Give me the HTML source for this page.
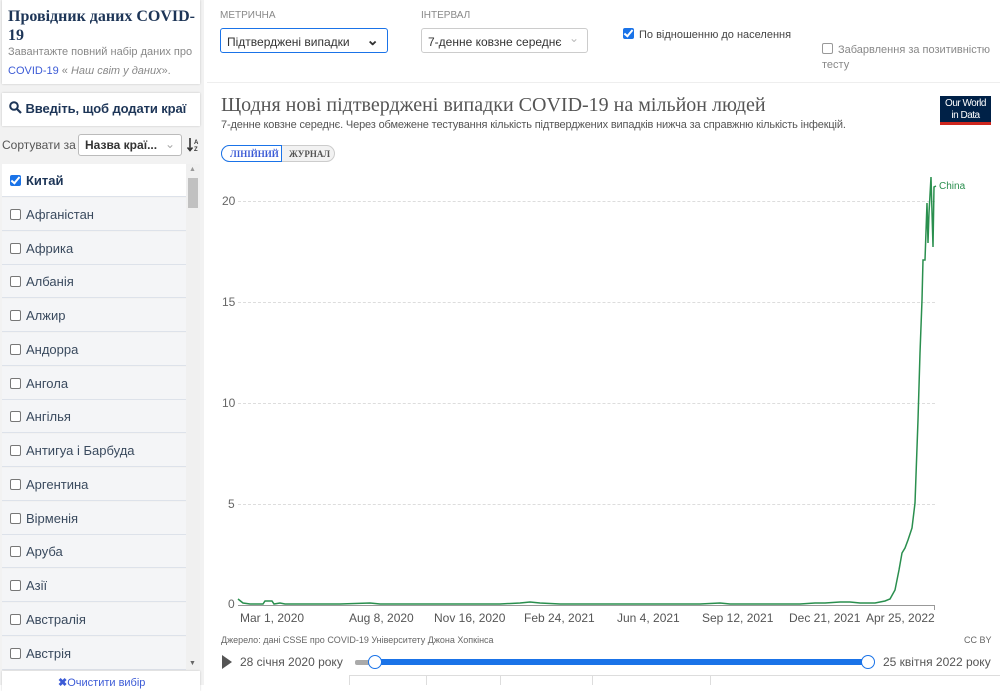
<!DOCTYPE html>
<html><head><meta charset="utf-8"><style>
*{box-sizing:border-box;margin:0;padding:0}
body{width:1000px;height:685px;overflow:hidden;background:#fff;font-family:"Liberation Sans",sans-serif;position:relative;color:#333}
.side{position:absolute;left:0;top:0;width:204px;height:685px;background:#f2f2f2}
.card{position:absolute;background:#fff;box-shadow:0 0 2px rgba(0,0,0,.2)}
.abs{position:absolute;white-space:nowrap}
.row{position:absolute;left:2px;width:184px;height:33px;background:#f4f5f7;border-bottom:1px solid #dde2ea;font-size:13px;color:#3a4a5e;padding:9px 0 0 8px}
.cb{display:inline-block;width:11px;height:11px;border:1px solid #777;border-radius:2px;background:#fff;vertical-align:-1px;margin-right:5px}
.cbk{display:inline-block;width:11px;height:11px;border-radius:2px;background:#1a73e8;vertical-align:-1px;margin-right:5px;position:relative}
.cbk:after{content:"";position:absolute;left:3px;top:0px;width:3px;height:7px;border:solid #fff;border-width:0 2px 2px 0;transform:rotate(40deg)}
.grid{position:absolute;left:238px;width:697px;border-top:1px dashed #ddd}
.yl{position:absolute;font-size:12px;color:#666;left:222px}
.xl{position:absolute;top:611px;font-size:12px;color:#555}
</style></head><body>
<div class="side">
 <div class="card" style="left:2px;top:0;width:198px;height:84px"></div>
 <div class="abs" style="left:8px;top:7px;font-family:'Liberation Serif',serif;font-weight:bold;font-size:16px;color:#1d3557;line-height:19px">Провідник даних COVID-<br>19</div>
 <div class="abs" style="left:8px;top:43px;font-size:11px;color:#888;line-height:19px">Завантажте повний набір даних про<br><span style="color:#3c5bd6">COVID-19</span> « <i>Наш світ у даних</i>».</div>
 <div class="card" style="left:2px;top:93px;width:198px;height:33px"></div>
 <div class="abs" style="left:9px;top:101px;font-size:13px;font-weight:bold;color:#1d3557;letter-spacing:-.1px"><svg width="13" height="13" viewBox="0 0 13 13" style="vertical-align:-1px"><circle cx="5" cy="5" r="3.8" fill="none" stroke="#1d3557" stroke-width="2"/><path d="M8 8L12 12" stroke="#1d3557" stroke-width="2.2"/></svg> Введіть, щоб додати краї</div>
 <div class="abs" style="left:2px;top:138px;font-size:12px;color:#555">Сортувати за</div>
 <div class="abs" style="left:78px;top:134px;width:104px;height:22px;background:#fff;border:1px solid #bbb;border-radius:3px;font-size:12px;font-weight:bold;color:#333;padding:3px 0 0 6px">Назва краї...<span style="position:absolute;right:6px;top:2px;color:#aaa;font-weight:normal">⌄</span></div>
 <svg class="abs" style="left:187px;top:137px" width="14" height="16" viewBox="0 0 14 16"><path d="M3 1V13M0.5 10.5L3 13.5L5.5 10.5" fill="none" stroke="#333" stroke-width="1.6"/><text x="7" y="7" font-size="6" font-weight="bold" fill="#333" font-family="Liberation Sans">A</text><text x="7" y="14" font-size="6" font-weight="bold" fill="#333" font-family="Liberation Sans">Z</text></svg>
 <div style="position:absolute;left:186px;top:164px;width:14px;height:506px;background:#f0f0f0"></div>
 <div style="position:absolute;left:188px;top:178px;width:10px;height:30px;background:#c1c1c1"></div>
 <div class="abs" style="left:189px;top:166px;font-size:7px;color:#999">▲</div>
 <div class="abs" style="left:189px;top:660px;font-size:7px;color:#666">▼</div>
 <div class="row" style="top:164px;background:#fff;font-weight:bold;color:#1d3557"><span class="cbk"></span>Китай</div>
 <div class="row" style="top:198px"><span class="cb"></span>Афганістан</div>
 <div class="row" style="top:231.5px"><span class="cb"></span>Африка</div>
 <div class="row" style="top:265px"><span class="cb"></span>Албанія</div>
 <div class="row" style="top:299px"><span class="cb"></span>Алжир</div>
 <div class="row" style="top:333px"><span class="cb"></span>Андорра</div>
 <div class="row" style="top:366.5px"><span class="cb"></span>Ангола</div>
 <div class="row" style="top:400px"><span class="cb"></span>Ангілья</div>
 <div class="row" style="top:434px"><span class="cb"></span>Антигуа і Барбуда</div>
 <div class="row" style="top:468px"><span class="cb"></span>Аргентина</div>
 <div class="row" style="top:501.5px"><span class="cb"></span>Вірменія</div>
 <div class="row" style="top:535px"><span class="cb"></span>Аруба</div>
 <div class="row" style="top:569px"><span class="cb"></span>Азії</div>
 <div class="row" style="top:603px"><span class="cb"></span>Австралія</div>
 <div class="row" style="top:636.5px;height:33px"><span class="cb"></span>Австрія</div>
 <div class="card" style="left:2px;top:671px;width:198px;height:20px"></div>
 <div class="abs" style="left:58px;top:676px;font-size:11px;color:#3c5bd6"><b>✖</b>Очистити вибір</div>
</div>
<div style="position:absolute;left:207px;top:82px;width:793px;height:1px;background:#eee"></div>
<div class="abs" style="left:220px;top:10px;font-size:10px;color:#888">МЕТРИЧНА</div>
<div class="abs" style="left:220px;top:28px;width:168px;height:25px;border:1px solid #1a73e8;border-radius:3px;font-size:12px;color:#333;padding:6px 0 0 6px">Підтверджені випадки<span style="position:absolute;right:8px;top:2px;font-size:15px;font-weight:bold">⌄</span></div>
<div class="abs" style="left:421px;top:10px;font-size:10px;color:#888">ІНТЕРВАЛ</div>
<div class="abs" style="left:421px;top:28px;width:167px;height:25px;border:1px solid #ccc;border-radius:3px;font-size:12px;color:#333;padding:6px 0 0 6px">7-денне ковзне середнє<span style="position:absolute;right:8px;top:2px;color:#bbb">⌄</span></div>
<div class="abs" style="left:623px;top:28px;font-size:11px;color:#444"><span class="cbk"></span>По відношенню до населення</div>
<div class="abs" style="left:822px;top:43px;font-size:11px;color:#888;line-height:15px"><span class="cb" style="border-color:#999"></span>Забарвлення за позитивністю<br>тесту</div>
<div class="abs" style="left:221px;top:94px;font-family:'Liberation Serif',serif;font-size:20px;color:#555">Щодня нові підтверджені випадки COVID-19 на мільйон людей</div>
<div class="abs" style="left:221px;top:119px;font-size:11px;color:#555;letter-spacing:-.15px">7-денне ковзне середнє. Через обмежене тестування кількість підтверджених випадків нижча за справжню кількість інфекцій.</div>
<div class="abs" style="left:940px;top:96px;width:51px;height:29px;background:#002147;color:#fff;font-size:10px;text-align:center;line-height:12px;padding-top:2px;border-bottom:3px solid #ce261e;letter-spacing:-.5px">Our World<br>in Data</div>
<div class="abs" style="left:221px;top:145px;width:114px;height:17px;border:1px solid #ccc;border-radius:9px;background:#f2f2f2;font-family:'Liberation Serif',serif;font-size:9px;font-weight:bold"><span style="position:absolute;left:-1px;top:-1px;width:61px;height:17px;border:1px solid #1a73e8;border-radius:9px 0 0 9px;background:#fff;color:#3c5bd6;padding:3px 0 0 8px">ЛІНІЙНИЙ</span><span style="position:absolute;left:67px;top:3px;color:#555">ЖУРНАЛ</span></div>
<div class="grid" style="top:201px"></div><div class="grid" style="top:302px"></div><div class="grid" style="top:403px"></div><div class="grid" style="top:504px"></div>
<div class="yl" style="top:194px">20</div><div class="yl" style="top:295px">15</div><div class="yl" style="top:396px">10</div><div class="yl" style="top:497px;left:228px">5</div><div class="yl" style="top:597px;left:228px">0</div>
<div style="position:absolute;left:238px;top:605px;width:697px;height:1px;background:#999"></div>
<div style="position:absolute;left:934px;top:605px;width:1px;height:5px;background:#999"></div>
<svg class="abs" style="left:0;top:0" width="1000" height="685"><polyline fill="none" stroke="#2a8f4e" stroke-width="1.5" points="238,599 243,603 250,604 263,604 265,601 272,601 274,604 280,603 285,604 340,604 370,603 380,604 500,604 520,603 530,602 540,603 560,604 700,604 720,603 730,604 800,604 815,603 825,603 840,602 850,602 860,603 875,603 885,601 890,599 895,590 899,570 902,553 905,548 908,540 912,528 915,503 918,420 920,353 922,300 923,260 925,260 927,203 928,243 929,213 931,177 933,247 934,187 936,186"/></svg>
<div class="abs" style="left:939px;top:181px;font-size:10px;color:#2a8f4e">China</div>
<div class="xl" style="left:240px">Mar 1, 2020</div><div class="xl" style="left:349px">Aug 8, 2020</div><div class="xl" style="left:434px">Nov 16, 2020</div><div class="xl" style="left:524px">Feb 24, 2021</div><div class="xl" style="left:617px">Jun 4, 2021</div><div class="xl" style="left:702px">Sep 12, 2021</div><div class="xl" style="left:789px">Dec 21, 2021</div><div class="xl" style="left:866px">Apr 25, 2022</div>
<div class="abs" style="left:221px;top:635px;font-size:9px;color:#666">Джерело: дані CSSE про COVID-19 Університету Джона Хопкінса</div>
<div class="abs" style="left:964px;top:635px;font-size:9px;color:#666">CC BY</div>
<div class="abs" style="left:222px;top:655px;width:0;height:0;border-left:10px solid #555;border-top:7px solid transparent;border-bottom:7px solid transparent"></div>
<div class="abs" style="left:240px;top:655px;font-size:12px;color:#555">28 січня 2020 року</div>
<div class="abs" style="left:355px;top:660px;width:20px;height:5px;background:#aaa;border-radius:2px"></div>
<div class="abs" style="left:375px;top:659px;width:493px;height:6px;background:#1a73e8"></div>
<div class="abs" style="left:368px;top:655px;width:14px;height:14px;border-radius:50%;background:#fff;border:1.5px solid #1a73e8"></div>
<div class="abs" style="left:861px;top:655px;width:14px;height:14px;border-radius:50%;background:#fff;border:1.5px solid #1a73e8"></div>
<div class="abs" style="left:883px;top:655px;font-size:12px;color:#555">25 квітня 2022 року</div>
<div class="abs" style="left:349px;top:675px;width:651px;height:10px;border-top:1px solid #ddd;border-left:1px solid #ddd"></div>
<div class="abs" style="left:426px;top:675px;width:1px;height:10px;background:#ddd"></div><div class="abs" style="left:500px;top:675px;width:1px;height:10px;background:#ddd"></div><div class="abs" style="left:592px;top:675px;width:1px;height:10px;background:#ddd"></div><div class="abs" style="left:710px;top:675px;width:1px;height:10px;background:#ddd"></div>
</body></html>
